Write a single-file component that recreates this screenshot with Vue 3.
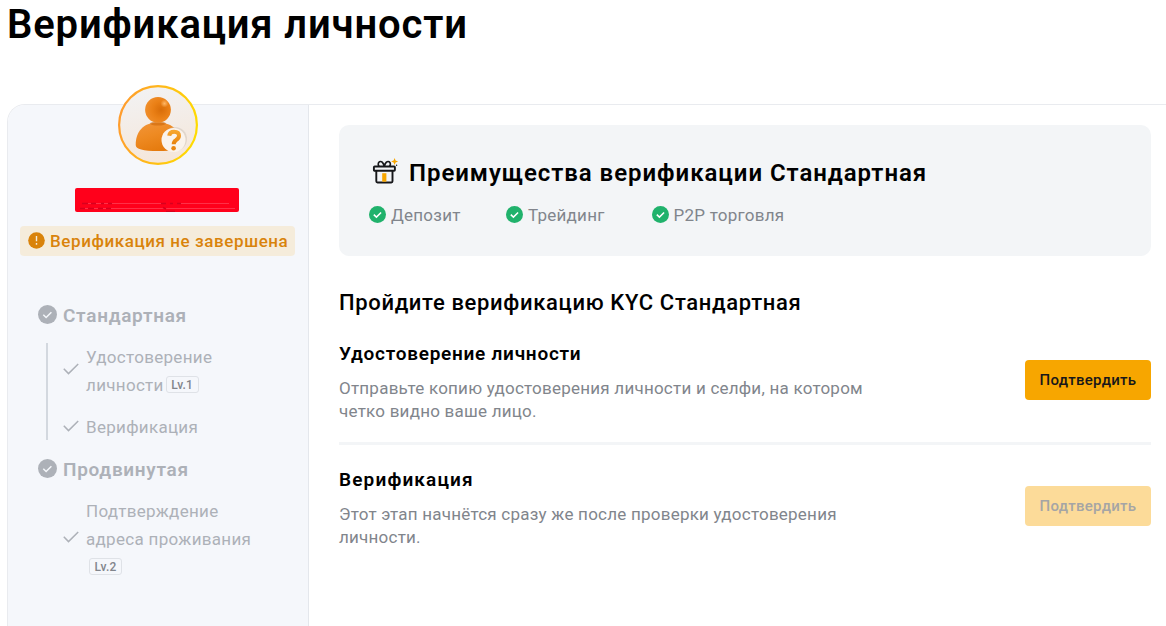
<template>
  <div class="page">
    <h1 class="page-title"><span>Верификация личности</span></h1>

    <div class="layout">
      <aside class="sidebar">
        <svg class="avatar" viewBox="0 0 80 80">
          <defs>
            <linearGradient id="ring" x1="0" y1="0.4" x2="1" y2="0.6">
              <stop offset="0" stop-color="#ff9c2e" />
              <stop offset="1" stop-color="#ffdc00" />
            </linearGradient>
            <linearGradient id="plate" x1="0.4" y1="0" x2="0.6" y2="1">
              <stop offset="0" stop-color="#f2f2f3" />
              <stop offset="1" stop-color="#f5e6d9" />
            </linearGradient>
            <radialGradient id="head" cx="0.62" cy="0.5" r="0.6">
              <stop offset="0" stop-color="#d96d08" />
              <stop offset="0.55" stop-color="#ea8016" />
              <stop offset="1" stop-color="#f08d29" />
            </radialGradient>
            <linearGradient id="torso" x1="0" y1="0" x2="0.5" y2="1">
              <stop offset="0" stop-color="#f2953a" />
              <stop offset="0.5" stop-color="#ee8a22" />
              <stop offset="1" stop-color="#e57a0d" />
            </linearGradient>
            <radialGradient id="glint">
              <stop offset="0" stop-color="#ffb766" />
              <stop offset="1" stop-color="#ffb766" stop-opacity="0" />
            </radialGradient>
            <linearGradient id="mark" x1="0" y1="0" x2="0" y2="1">
              <stop offset="0" stop-color="#f6a52e" />
              <stop offset="1" stop-color="#e8820c" />
            </linearGradient>
          </defs>
          <circle cx="40" cy="40" r="38.9" fill="url(#plate)" stroke="url(#ring)" stroke-width="2.2" />
          <path d="M17.700 60c0-13 7-22.500 22.300-22.500S63 47 63 60c0 4-8 6-23 6s-22.300-2-22.300-6z" fill="url(#torso)" />
          <ellipse cx="40" cy="38.500" rx="8" ry="2" fill="#c96408" opacity="0.55" />
          <circle cx="40" cy="24.800" r="12.900" fill="url(#head)" />
          <circle cx="46.500" cy="18.500" r="4" fill="url(#glint)" />
          <circle cx="57" cy="54" r="12" fill="#cfc3b8" opacity="0.5" />
          <circle cx="55.500" cy="55" r="12" fill="#faf3ec" />
          <path
            d="M51.200 50.700c.3-2.600 2.200-4 4.900-4 3 0 4.900 1.500 4.900 4.100 0 2.300-1.400 3.300-3 4.400-1.600 1-2.300 1.800-2.300 4"
            fill="none"
            stroke="url(#mark)"
            stroke-width="4"
          />
          <circle cx="55.600" cy="63.300" r="2.300" fill="#ea850d" />
        </svg>

        <svg class="redaction" viewBox="0 0 164 24">
          <rect width="164" height="24" rx="2" fill="#ff001b" />
          <path d="M7 15.500h80M105 15.500h49M5 20.500h155" stroke="#ff3048" stroke-width="1.200" />
          <path d="M5 20.500h5m3 0h6m4 0h5m3 0h5M7 15.500h6m3 0h5m5 0h3m4 0h4M86 15.500h5m4 0h3m4 0h4M88 19.500l3 1.500M91 23.500h9" stroke="#d8001e" stroke-width="1.500" />
        </svg>

        <div class="status">
          <svg class="status-icon" viewBox="0 0 17 17">
            <circle cx="8.500" cy="8.500" r="8.300" fill="#d9830b" />
            <path d="M8.500 4v5.300M8.500 11v1.700" stroke="#f5ecdb" stroke-width="1.400" />
          </svg>
          <span>Верификация не завершена</span>
        </div>

        <nav class="levels">
          <section v-for="level in levels" :key="level.title" class="level">
            <h2 class="level-title">
              <svg class="level-icon" viewBox="0 0 19 19">
                <circle cx="9.500" cy="9.500" r="9.500" fill="#adb1b8" />
                <path d="M5.300 9.800l2.800 2.700 5.300-5.300" fill="none" stroke="#f5f7fb" stroke-width="1.500" />
              </svg>
              <span class="level-name">{{ level.title }}</span>
            </h2>
            <ul class="steps" :class="{ 'steps--lined': level.lined }">
              <li v-for="step in level.steps" :key="step.name" class="step">
                <svg class="step-icon" viewBox="0 0 16 12">
                  <path d="M.8 5.800l4.700 4.800L15.200 1" fill="none" stroke="#adb1b8" stroke-width="1.500" />
                </svg>
                <span class="step-text">
                  <span v-for="line in step.lines" :key="line.text" class="step-line">
                    <span>{{ line.text }}</span>
                    <span v-if="line.badge" class="badge">{{ line.badge }}</span>
                  </span>
                </span>
              </li>
            </ul>
          </section>
        </nav>
      </aside>

      <main class="content">
        <section class="benefits">
          <h2 class="benefits-title">
            <svg class="gift" viewBox="0 0 27 27">
              <g fill="none" stroke="#16171a" stroke-width="1.900" stroke-linejoin="round" stroke-linecap="round">
                <rect x="1.900" y="9.500" width="21" height="4.200" rx="0.800" />
                <path d="M4.300 14v10.300q0 1.200 1.200 1.200h13.800q1.200 0 1.200-1.200V14" />
                <path d="M12.200 9.200C11.300 5.500 9.300 3.800 7.500 4.800 5.800 5.800 6 8 7 9.200M12.400 9.200c.9-3.700 2.900-5.400 4.700-4.400 1.700 1 1.500 3.200.5 4.400" stroke-width="1.700" />
              </g>
              <path d="M10.200 16.200h4.200v8.500h-4.200z" fill="#f7a600" />
              <path d="M22.600.9l1 2.600 2.500 1-2.500 1-1 2.600-1-2.600-2.500-1 2.500-1z" fill="#f7a600" />
              <circle cx="24.600" cy="8.200" r="0.700" fill="#16171a" />
            </svg>
            <span>Преимущества верификации Стандартная</span>
          </h2>
          <ul class="benefits-list">
            <li v-for="(item, i) in benefits" :key="item" class="benefit" :class="`benefit--${i + 1}`">
              <svg class="benefit-icon" viewBox="0 0 17 17">
                <circle cx="8.500" cy="8.500" r="8.500" fill="#20b26c" />
                <path d="M4.800 8.600l2.600 2.500 4.700-4.600" fill="none" stroke="#fff" stroke-width="1.500" />
              </svg>
              <span class="benefit-name">{{ item }}</span>
            </li>
          </ul>
        </section>

        <h2 class="content-title"><span>Пройдите верификацию KYC Стандартная</span></h2>

        <section v-for="task in tasks" :key="task.title" class="task">
          <div class="task-info">
            <h3 class="task-title">{{ task.title }}</h3>
            <p class="task-text">
              {{ task.text[0] }}<br />{{ task.text[1] }}
            </p>
          </div>
          <button class="confirm" type="button" :disabled="task.disabled">
            <span>Подтвердить</span>
          </button>
        </section>
      </main>
    </div>
  </div>
</template>

<script setup>
const levels = [
  {
    title: 'Стандартная',
    lined: true,
    steps: [
      {
        name: 'identity',
        lines: [
          { text: 'Удостоверение' },
          { text: 'личности', badge: 'Lv.1' }
        ]
      },
      { name: 'check', lines: [{ text: 'Верификация' }] }
    ]
  },
  {
    title: 'Продвинутая',
    lined: false,
    steps: [
      {
        name: 'address',
        lines: [
          { text: 'Подтверждение' },
          { text: 'адреса проживания' },
          { text: '', badge: 'Lv.2' }
        ]
      }
    ]
  }
]

const benefits = ['Депозит', 'Трейдинг', 'P2P торговля']

const tasks = [
  {
    title: 'Удостоверение личности',
    text: ['Отправьте копию удостоверения личности и селфи, на котором', 'четко видно ваше лицо.'],
    disabled: false
  },
  {
    title: 'Верификация',
    text: ['Этот этап начнётся сразу же после проверки удостоверения', 'личности.'],
    disabled: true
  }
]
</script>

<style>
body {
  background: #fff;
}
</style>

<style scoped>
.page {
  height: 626px;
  overflow: hidden;
  display: flex;
  flex-direction: column;
  font-family: Roboto, 'Noto Sans', sans-serif;
  color: #000;
  white-space: nowrap;
}

h1,
h2,
h3,
p,
ul {
  margin: 0;
  padding: 0;
}

ul {
  list-style: none;
}

svg {
  display: block;
  flex: none;
}

.page-title {
  height: 104px;
  padding: 1px 0 0 7px;
  box-sizing: border-box;
  font-size: 40px;
  line-height: 48px;
  font-weight: 600;
  letter-spacing: 0.85px;
}

.layout {
  flex: 1;
  display: flex;
  margin-left: 7px;
  border: 1px solid #e9ebef;
  border-width: 1px 0 0 1px;
  border-top-left-radius: 18px;
}

.sidebar {
  width: 300px;
  border-right: 1px solid #e4e7ec;
  border-top-left-radius: 17px;
  background: #f5f7fb;
  display: flex;
  flex-direction: column;
  align-items: center;
}

.avatar {
  width: 80px;
  height: 80px;
  margin-top: -20px;
}

.redaction {
  width: 164px;
  height: 24px;
  margin: 23px 2px 0 0;
}

.status {
  width: 275px;
  height: 30px;
  margin: 14px 1px 0 0;
  padding: 0 0 1px 8px;
  box-sizing: border-box;
  border-radius: 4px;
  background: #f5ecdb;
  display: flex;
  align-items: center;
  gap: 5px;
  font-size: 17px;
  font-weight: 500;
  letter-spacing: 0.58px;
  color: #d9830b;
}

.status-icon {
  width: 17px;
  height: 17px;
}

.levels {
  align-self: stretch;
  padding: 44px 0 0 30px;
}

.level-title {
  height: 28px;
  display: flex;
  align-items: center;
  gap: 6px;
  font-size: 19px;
  font-weight: 600;
  letter-spacing: 0.7px;
  color: #adb1b8;
}

.level-name {
  padding-top: 2px;
}

.level-icon {
  width: 19px;
  height: 19px;
}

.steps {
  margin: 14px 0 15px 8px;
  padding-left: 17px;
  display: flex;
  flex-direction: column;
  gap: 15px;
}

.steps--lined {
  height: 97px;
  margin-top: 15px;
  margin-bottom: 14px;
  padding-left: 15px;
  border-left: 2px solid #d3d8df;
}

.step {
  display: flex;
  align-items: center;
  gap: 7px;
  font-size: 17px;
  line-height: 28px;
  letter-spacing: 0.3px;
  color: #adb1b8;
}

.steps--lined .step:first-child {
  margin-top: -1px;
}

.step-icon {
  width: 16px;
  height: 12px;
  margin-bottom: 1px;
}

.step-text {
  display: flex;
  flex-direction: column;
  margin: 1px 0 -1px;
}

.step-line {
  height: 27.700px;
  display: flex;
  align-items: center;
  gap: 2px;
}

.step-line:last-child:nth-child(3) {
  gap: 3px;
}

.badge {
  width: 33px;
  height: 17px;
  box-sizing: border-box;
  border: 1px solid #dfe2e7;
  border-radius: 3px;
  font-size: 12px;
  line-height: 16px;
  font-weight: 500;
  letter-spacing: 0.2px;
  text-align: center;
  color: #81858c;
}

.content {
  flex: 1;
  padding: 20px 15px 0 30px;
}

.benefits {
  height: 131px;
  padding: 33px 30px 0;
  box-sizing: border-box;
  border-radius: 10px;
  background: #f3f5f7;
}

.benefits-title {
  display: flex;
  align-items: center;
  gap: 10px;
  height: 30px;
  padding-left: 3px;
  font-size: 24px;
  font-weight: 600;
  letter-spacing: 0.95px;
}

.gift {
  width: 27px;
  height: 27px;
  margin-bottom: 5px;
}

.benefits-list {
  display: flex;
  margin-top: 15px;
}

.benefit {
  display: flex;
  align-items: center;
  gap: 5px;
  height: 22px;
  font-size: 17px;
  letter-spacing: 0.25px;
  color: #81858c;
}

.benefit-name {
  padding-top: 1px;
}

.benefit--1 {
  width: 137px;
}

.benefit--2 {
  width: 145.500px;
}

.benefit-icon {
  width: 17px;
  height: 17px;
}

.content-title {
  margin-top: 32px;
  font-size: 22px;
  line-height: 30px;
  font-weight: 500;
  letter-spacing: 0.66px;
}

.task {
  height: 124px;
  padding-top: 22px;
  box-sizing: border-box;
  display: flex;
  align-items: flex-start;
  justify-content: space-between;
}

.task + .task {
  padding-top: 21px;
  border-top: 3px solid #f3f5f7;
}

.task-title {
  margin-top: 1px;
  font-size: 19px;
  line-height: 26px;
  font-weight: 600;
  letter-spacing: 0.74px;
}

.task + .task .task-title {
  letter-spacing: 1.15px;
}

.task-text {
  margin-top: 10px;
  font-size: 17px;
  line-height: 23px;
  letter-spacing: 0.23px;
  color: #81858c;
}

.confirm {
  width: 126px;
  height: 40px;
  margin-top: 20px;
  padding: 0;
  border: 0;
  border-radius: 4px;
  background: #f7a600;
  font: 500 15px Roboto, sans-serif;
  letter-spacing: 0.3px;
  color: #16171a;
}

.confirm:disabled {
  background: #fcdb99;
  color: #a5a5a5;
}
</style>
